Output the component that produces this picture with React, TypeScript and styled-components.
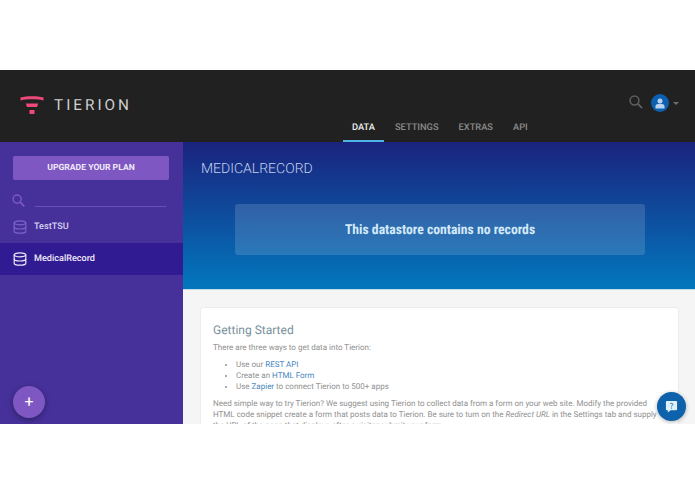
import React from 'react'
import styled, { createGlobalStyle } from 'styled-components'

const GlobalStyle = createGlobalStyle`
  html, body {
    margin: 0;
    background: #fff;
    font-family: Roboto, "Liberation Sans", sans-serif;
    text-rendering: geometricPrecision;
  }
`

const Page = styled.div`
  padding-top: 70px;
`
const Frame = styled.div`
  position: relative;
  height: 354px;
  overflow: hidden;
  display: flex;
  flex-direction: column;
`
const Header = styled.header`
  height: 72px;
  flex-shrink: 0;
  background: #212121;
  display: flex;
  justify-content: space-between;
  padding: 0 16px 0 20px;
  box-sizing: border-box;
`
const Brand = styled.div`
  display: flex;
  align-items: center;
  gap: 10px;
  height: 70px;
`
const BrandName = styled.div`
  color: #d0d0d0;
  font-size: 15.3px;
  letter-spacing: 3px;
  font-weight: 400;
`
const UserRow = styled.div`
  display: flex;
  align-items: center;
  height: 66px;
  box-sizing: border-box;
`
const SearchWrap = styled.div`
  display: flex;
  margin-right: 8px;
  margin-top: -2px;
`
const Avatar = styled.div`
  width: 18px;
  height: 18px;
  border-radius: 50%;
  background: #0d5fb0;
  display: flex;
  align-items: center;
  justify-content: center;
  margin-right: 4px;
`
const Caret = styled.div`
  width: 0;
  height: 0;
  border-left: 3px solid transparent;
  border-right: 3px solid transparent;
  border-top: 3px solid #6f6f6f;
`
const Tabs = styled.nav`
  position: absolute;
  top: 43px;
  left: 343px;
  display: flex;
  height: 29px;
`
const Tab = styled.div<{ $active?: boolean }>`
  height: 29px;
  box-sizing: border-box;
  padding: 9px 9px 0;
  margin-right: 2px;
  font-size: 9.3px;
  line-height: 12px;
  font-weight: 500;
  color: ${props => (props.$active ? '#f0f0f0' : '#8c8c8c')};
  border-bottom: 2px solid ${props => (props.$active ? '#4fb3e8' : 'transparent')};
`
const Body = styled.div`
  flex: 1;
  display: flex;
  min-height: 0;
`
const Sidebar = styled.aside`
  width: 183px;
  flex-shrink: 0;
  background: #46319b;
  position: relative;
  padding-top: 14px;
  box-sizing: border-box;
`
const UpgradeButton = styled.div`
  margin: 0 14px 0 13px;
  height: 24px;
  background: #7e57c2;
  border-radius: 2px;
  color: #f0eaf8;
  font-size: 8.6px;
  font-weight: 700;
  display: flex;
  align-items: center;
  justify-content: center;
`
const SearchRow = styled.div`
  display: flex;
  align-items: flex-start;
  height: 31px;
  padding: 14px 17px 0 12px;
  box-sizing: border-box;
  gap: 10px;
`
const SearchLine = styled.div`
  flex: 1;
  height: 12px;
  border-bottom: 1px solid #6a4fb8;
`
const DataRow = styled.div<{ $active?: boolean }>`
  height: 32px;
  display: flex;
  align-items: center;
  gap: 7px;
  padding-left: 13px;
  font-size: 9.1px;
  font-weight: 500;
  color: ${props => (props.$active ? '#ece8f8' : '#d9d2f0')};
  background: ${props => (props.$active ? '#311b92' : 'transparent')};
`
const Fab = styled.div`
  position: absolute;
  left: 13px;
  bottom: 6px;
  width: 32px;
  height: 32px;
  border-radius: 50%;
  background: #7e57c2;
  box-shadow: 0 2px 6px rgba(0, 0, 0, 0.35);
  color: #fff;
  font-size: 16px;
  line-height: 32px;
  text-align: center;
`
const Main = styled.main`
  flex: 1;
  background: #f5f5f5;
  min-width: 0;
`
const Hero = styled.section`
  height: 148px;
  box-sizing: border-box;
  padding: 19px 50px 0 18px;
  background: linear-gradient(180deg, #1a237e 0%, #0277bd 100%);
  border-bottom: 1px solid #c9dbe8;
`
const HeroTitle = styled.h1`
  margin: 0;
  font-size: 14px;
  line-height: 17px;
  font-weight: 300;
  color: #c3d0ec;
`
const EmptyBox = styled.div`
  margin: 26px 0 0 34px;
  height: 51px;
  border-radius: 3px;
  background: rgba(255, 255, 255, 0.14);
  color: #d3e9f8;
  display: flex;
  align-items: center;
  justify-content: center;
  font-size: 13.7px;
  font-weight: 700;
  font-stretch: 75%;
`
const Card = styled.article`
  margin: 18px 17px 0 18px;
  padding: 15px 12px 0;
  background: #fff;
  border-radius: 2px;
  height: 200px;
  box-sizing: border-box;
  box-shadow: 0 0 2px rgba(0, 0, 0, 0.12);
`
const CardTitle = styled.h2`
  margin: 0 0 4px;
  font-size: 12px;
  line-height: 15px;
  font-weight: 400;
  color: #78909c;
`
const Paragraph = styled.p`
  margin: 0;
  font-size: 8px;
  line-height: 11px;
  color: #909090;
`
const WaysList = styled.ul`
  margin: 6px 0;
  padding-left: 23px;
  font-size: 8px;
  line-height: 11px;
  color: #909090;
`
const TextLink = styled.span`
  color: #4a86c0;
`
const ChatButton = styled.div`
  position: absolute;
  left: 657px;
  top: 322px;
  width: 29px;
  height: 29px;
  border-radius: 50%;
  background: #0d62ab;
  box-shadow: 0 1px 4px rgba(0, 0, 0, 0.3);
  display: flex;
  align-items: center;
  justify-content: center;
`

const DatabaseIcon = ({ color }: { color: string }) => (
  <svg width="14" height="14" viewBox="0 0 14 14" fill="none" stroke={color} strokeWidth="1.2">
    <ellipse cx="7" cy="2.8" rx="5.8" ry="2" />
    <path d="M1.2 2.8v8.4c0 1.1 2.6 2 5.8 2s5.8-.9 5.8-2V2.8" />
    <path d="M1.2 7c0 1.1 2.6 2 5.8 2s5.8-.9 5.8-2" />
  </svg>
)

const SearchIcon = ({ color, size }: { color: string; size: number }) => (
  <svg width={size} height={size} viewBox="0 0 14 14" fill="none" stroke={color} strokeWidth="1.5">
    <circle cx="5.5" cy="5.5" r="4.4" />
    <path d="M8.8 8.8L13.2 13.2" strokeWidth="1.9" />
  </svg>
)

const App = () => {
  return (
    <>
      <GlobalStyle />
      <Page>
        <Frame>
          <Header>
            <Brand>
              <svg width="24" height="20" viewBox="0 0 24 20" fill="#ef4a7c">
                <path d="M0.5 2.4C7 0.8 17 0.8 23.5 2.4V5.4C17 4 7 4 0.5 5.4Z" />
                <path d="M5.8 8.5H18.2L17 12H7Z" />
                <path d="M9.5 15H14.5V19H9.5Z" />
              </svg>
              <BrandName>TIERION</BrandName>
            </Brand>
            <UserRow>
              <SearchWrap>
                <SearchIcon color="#5f5f5f" size={14} />
              </SearchWrap>
              <Avatar>
                <svg width="10" height="11" viewBox="0 0 10 11" fill="#b9d2ee">
                  <circle cx="5" cy="3" r="2.5" />
                  <path d="M0.5 10.5V8.2C0.5 6.6 2.5 5.8 5 5.8S9.5 6.6 9.5 8.2V10.5Z" />
                </svg>
              </Avatar>
              <Caret />
            </UserRow>
            <Tabs>
              <Tab $active>DATA</Tab>
              <Tab>SETTINGS</Tab>
              <Tab>EXTRAS</Tab>
              <Tab>API</Tab>
            </Tabs>
          </Header>
          <Body>
            <Sidebar>
              <UpgradeButton>UPGRADE YOUR PLAN</UpgradeButton>
              <SearchRow>
                <SearchIcon color="#7e57c2" size={13} />
                <SearchLine />
              </SearchRow>
              <DataRow>
                <DatabaseIcon color="#7e62c8" />
                TestTSU
              </DataRow>
              <DataRow $active>
                <DatabaseIcon color="#ece8f8" />
                MedicalRecord
              </DataRow>
              <Fab>+</Fab>
            </Sidebar>
            <Main>
              <Hero>
                <HeroTitle>MEDICALRECORD</HeroTitle>
                <EmptyBox>This datastore contains no records</EmptyBox>
              </Hero>
              <Card>
                <CardTitle>Getting Started</CardTitle>
                <Paragraph>There are three ways to get data into Tierion:</Paragraph>
                <WaysList>
                  <li>Use our <TextLink>REST API</TextLink></li>
                  <li>Create an <TextLink>HTML Form</TextLink></li>
                  <li>Use <TextLink>Zapier</TextLink> to connect Tierion to 500+ apps</li>
                </WaysList>
                <Paragraph>
                  Need simple way to try Tierion? We suggest using Tierion to collect data from a form on your web site. Modify the provided
                  HTML code snippet create a form that posts data to Tierion. Be sure to turn on the <em>Redirect URL</em> in the Settings tab and supply
                  the URL of the page that displays after a visitor submit your form.
                </Paragraph>
              </Card>
            </Main>
          </Body>
          <ChatButton>
            <svg width="13" height="13" viewBox="0 0 14 14">
              <path d="M2 1H12C12.6 1 13 1.4 13 2V10C13 10.6 12.6 11 12 11H6L3 13.5V11H2C1.4 11 1 10.6 1 10V2C1 1.4 1.4 1 2 1Z" fill="#dff0fb" />
              <path d="M5.5 4.4C5.7 3.4 8.4 3.2 8.5 4.8C8.5 5.9 7 5.9 7 7" fill="none" stroke="#0d62ab" strokeWidth="1" />
              <circle cx="7" cy="8.6" r="0.65" fill="#0d62ab" />
            </svg>
          </ChatButton>
        </Frame>
      </Page>
    </>
  )
}

export default App
